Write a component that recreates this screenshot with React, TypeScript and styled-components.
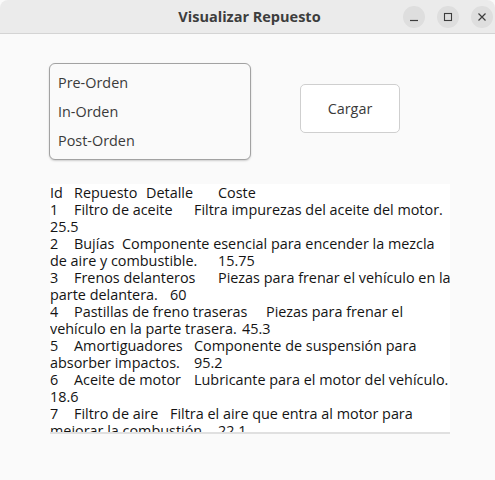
import React from "react";
import styled, { createGlobalStyle } from "styled-components";

const Global = createGlobalStyle`
  html, body { margin: 0; padding: 0; background: #fafafa; }
  body { font-family: "Open Sans", "Noto Sans", sans-serif; }
  * { box-sizing: border-box; }
`;

const Window = styled.div`
  width: 495px;
  height: 480px;
  display: flex;
  flex-direction: column;
  background: #fafafa;
  overflow: hidden;
`;

const TitleBar = styled.div`
  height: 34px;
  flex: none;
  display: grid;
  grid-template-columns: 1fr auto 1fr;
  align-items: center;
  background: #ebebeb;
  border-bottom: 1px solid #d4d4d4;
  border-top-left-radius: 8px;
  border-top-right-radius: 8px;
`;

const Title = styled.div`
  grid-column: 2;
  padding-left: 4px;
  font-family: "Open Sans", sans-serif;
  font-weight: 700;
  font-size: 14.5px;
  color: #3d3d3d;
`;

const Controls = styled.div`
  grid-column: 3;
  justify-self: end;
  display: flex;
  gap: 12px;
  padding-right: 2px;
`;

const CtrlButton = styled.div`
  width: 22px;
  height: 22px;
  border-radius: 50%;
  background: #dedede;
  display: flex;
  align-items: center;
  justify-content: center;
  color: #3d3d3d;
`;

const Main = styled.div`
  flex: 1;
  padding: 29px 0 0 49px;
  display: flex;
  flex-direction: column;
  align-items: flex-start;
`;

const TopRow = styled.div`
  display: flex;
  align-items: flex-start;
  gap: 49px;
`;

const OptionList = styled.div`
  width: 202px;
  height: 97px;
  padding: 4px 0;
  border: 1px solid #a2a2a2;
  border-radius: 6px;
  background: #fafafa;
  box-shadow: 0 1px 2px rgba(0, 0, 0, 0.18);
`;

const OptionItem = styled.div`
  height: 29px;
  line-height: 29px;
  padding-left: 8px;
  font-size: 14.4px;
  color: #3a3a3a;
`;

const LoadButton = styled.button`
  margin-top: 21px;
  width: 100px;
  height: 49px;
  border: 1px solid #cfcfcf;
  border-radius: 5px;
  background: #ffffff;
  font-family: "Open Sans", sans-serif;
  font-size: 14.4px;
  color: #3a3a3a;
  padding: 0;
`;

const TextPane = styled.div`
  margin-top: 24px;
  margin-left: 1px;
  width: 400px;
  height: 250px;
  background: #ffffff;
  overflow: hidden;
  border-bottom: 2px solid #e0e0e0;
`;

const TextLine = styled.div`
  white-space: pre;
  tab-size: 24px;
  -moz-tab-size: 24px;
  line-height: 17px;
  height: 17px;
  font-size: 14.4px;
  color: #141414;
`;

const lines = [
  "Id\tRepuesto\tDetalle\tCoste",
  "1\tFiltro de aceite\tFiltra impurezas del aceite del motor.",
  "25.5",
  "2\tBujías\tComponente esencial para encender la mezcla",
  "de aire y combustible.\t15.75",
  "3\tFrenos delanteros\tPiezas para frenar el vehículo en la",
  "parte delantera.\t60",
  "4\tPastillas de freno traseras\tPiezas para frenar el",
  "vehículo en la parte trasera.\t45.3",
  "5\tAmortiguadores\tComponente de suspensión para",
  "absorber impactos.\t95.2",
  "6\tAceite de motor\tLubricante para el motor del vehículo.",
  "18.6",
  "7\tFiltro de aire\tFiltra el aire que entra al motor para",
  "mejorar la combustión.\t22.1",
];

const MinIcon = () => (
  <svg width="12" height="12" viewBox="0 0 12 12">
    <line x1="2" y1="9.5" x2="10" y2="9.5" stroke="currentColor" strokeWidth="1.2" />
  </svg>
);
const MaxIcon = () => (
  <svg width="12" height="12" viewBox="0 0 12 12">
    <rect x="2.5" y="2.5" width="7" height="7" fill="none" stroke="currentColor" strokeWidth="1.1" />
  </svg>
);
const CloseIcon = () => (
  <svg width="12" height="12" viewBox="0 0 12 12">
    <path d="M2.5 2.5 L9.5 9.5 M9.5 2.5 L2.5 9.5" stroke="currentColor" strokeWidth="1.2" />
  </svg>
);

export default function App() {
  return (
    <>
      <Global />
      <Window>
        <TitleBar>
          <Title>Visualizar Repuesto</Title>
          <Controls>
            <CtrlButton><MinIcon /></CtrlButton>
            <CtrlButton><MaxIcon /></CtrlButton>
            <CtrlButton><CloseIcon /></CtrlButton>
          </Controls>
        </TitleBar>
        <Main>
          <TopRow>
            <OptionList>
              <OptionItem>Pre-Orden</OptionItem>
              <OptionItem>In-Orden</OptionItem>
              <OptionItem>Post-Orden</OptionItem>
            </OptionList>
            <LoadButton>Cargar</LoadButton>
          </TopRow>
          <TextPane>
            {lines.map((l, i) => (
              <TextLine key={i}>{l}</TextLine>
            ))}
          </TextPane>
        </Main>
      </Window>
    </>
  );
}
